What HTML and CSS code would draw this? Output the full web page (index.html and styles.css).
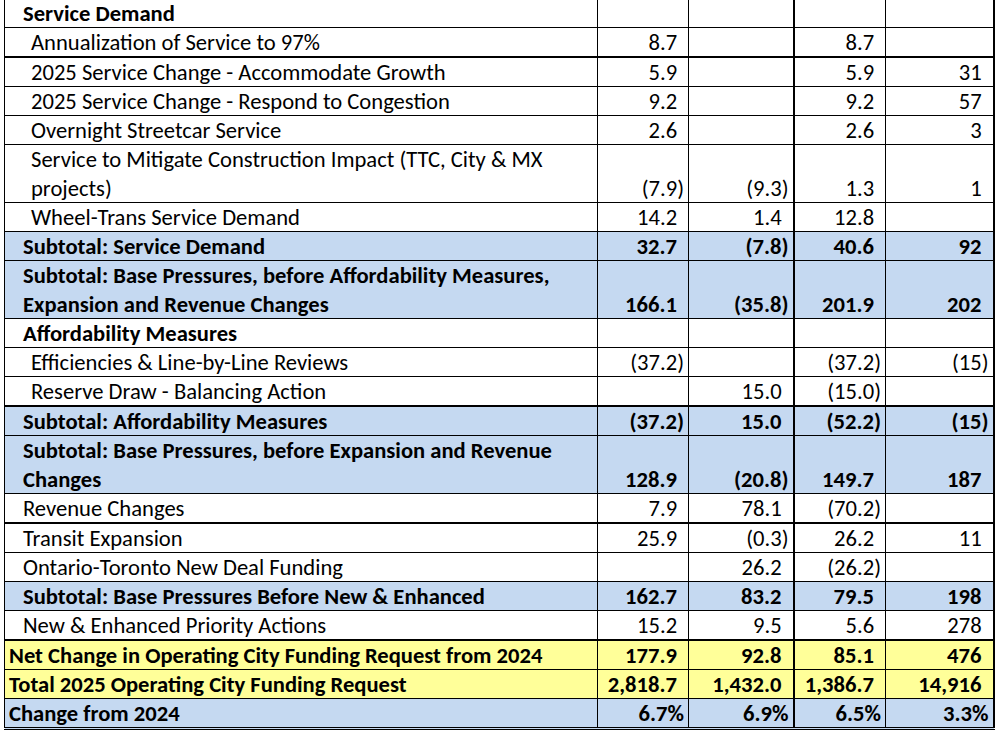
FILE: index.html
```html
<!DOCTYPE html>
<html lang="en">
<head>
<meta charset="utf-8">
<title>2025 Operating Budget Summary</title>
<link rel="stylesheet" href="styles.css">
</head>
<body>
<div class="sheet">
<table class="budget">
  <colgroup>
    <col class="c-label"><col class="c-a"><col class="c-b"><col class="c-c"><col class="c-d">
  </colgroup>
  <tbody>
    <tr class="r1">
      <th class="lbl in1 b">Service Demand</th><td></td><td class="sep"></td><td></td><td></td>
    </tr>
    <tr class="thick">
      <th class="lbl in2">Annualization of Service to 97%</th><td class="p">8.7</td><td class="sep"></td><td class="p">8.7</td><td></td>
    </tr>
    <tr>
      <th class="lbl in2">2025 Service Change - Accommodate Growth</th><td class="p">5.9</td><td class="sep"></td><td class="p">5.9</td><td class="p">31</td>
    </tr>
    <tr>
      <th class="lbl in2">2025 Service Change - Respond to Congestion</th><td class="p">9.2</td><td class="sep"></td><td class="p">9.2</td><td class="p">57</td>
    </tr>
    <tr>
      <th class="lbl in2">Overnight Streetcar Service</th><td class="p">2.6</td><td class="sep"></td><td class="p">2.6</td><td class="p">3</td>
    </tr>
    <tr class="dbl">
      <th class="lbl in2">Service to Mitigate Construction Impact (TTC, City &amp; MX<br>projects)</th><td class="ng">(7.9)</td><td class="sep ng">(9.3)</td><td class="p">1.3</td><td class="p">1</td>
    </tr>
    <tr>
      <th class="lbl in2">Wheel-Trans Service Demand</th><td class="p">14.2</td><td class="sep p">1.4</td><td class="p">12.8</td><td></td>
    </tr>
    <tr class="blue b">
      <th class="lbl in1">Subtotal: Service Demand</th><td class="p">32.7</td><td class="sep ng">(7.8)</td><td class="p">40.6</td><td class="p">92</td>
    </tr>
    <tr class="blue b dbl">
      <th class="lbl in1">Subtotal: Base Pressures, before Affordability Measures,<br>Expansion and Revenue Changes</th><td class="p">166.1</td><td class="sep ng">(35.8)</td><td class="p">201.9</td><td class="p">202</td>
    </tr>
    <tr class="b">
      <th class="lbl in1">Affordability Measures</th><td></td><td class="sep"></td><td></td><td></td>
    </tr>
    <tr>
      <th class="lbl in2">Efficiencies &amp; Line-by-Line Reviews</th><td class="ng">(37.2)</td><td class="sep"></td><td class="ng">(37.2)</td><td class="ng">(15)</td>
    </tr>
    <tr class="thick">
      <th class="lbl in2">Reserve Draw - Balancing Action</th><td></td><td class="sep p">15.0</td><td class="ng">(15.0)</td><td></td>
    </tr>
    <tr class="blue b">
      <th class="lbl in1">Subtotal: Affordability Measures</th><td class="ng">(37.2)</td><td class="sep p">15.0</td><td class="ng">(52.2)</td><td class="ng">(15)</td>
    </tr>
    <tr class="blue b dbl">
      <th class="lbl in1">Subtotal: Base Pressures, before Expansion and Revenue<br>Changes</th><td class="p">128.9</td><td class="sep ng">(20.8)</td><td class="p">149.7</td><td class="p">187</td>
    </tr>
    <tr class="thick">
      <th class="lbl in1">Revenue Changes</th><td class="p">7.9</td><td class="sep p">78.1</td><td class="ng">(70.2)</td><td></td>
    </tr>
    <tr>
      <th class="lbl in1">Transit Expansion</th><td class="p">25.9</td><td class="sep ng">(0.3)</td><td class="p">26.2</td><td class="p">11</td>
    </tr>
    <tr>
      <th class="lbl in1">Ontario-Toronto New Deal Funding</th><td></td><td class="sep p">26.2</td><td class="ng">(26.2)</td><td></td>
    </tr>
    <tr class="blue b">
      <th class="lbl in1">Subtotal: Base Pressures Before New &amp; Enhanced</th><td class="p">162.7</td><td class="sep p">83.2</td><td class="p">79.5</td><td class="p">198</td>
    </tr>
    <tr class="thick">
      <th class="lbl in1">New &amp; Enhanced Priority Actions</th><td class="p">15.2</td><td class="sep p">9.5</td><td class="p">5.6</td><td class="p">278</td>
    </tr>
    <tr class="yellow b">
      <th class="lbl in0">Net Change in Operating City Funding Request from 2024</th><td class="p">177.9</td><td class="sep p">92.8</td><td class="p">85.1</td><td class="p">476</td>
    </tr>
    <tr class="yellow b">
      <th class="lbl in0">Total 2025 Operating City Funding Request</th><td class="p">2,818.7</td><td class="sep p">1,432.0</td><td class="p">1,386.7</td><td class="p">14,916</td>
    </tr>
    <tr class="blue b last">
      <th class="lbl in0">Change from 2024</th><td>6.7%</td><td class="sep">6.9%</td><td>6.5%</td><td>3.3%</td>
    </tr>
  </tbody>
</table>
</div>
</body>
</html>
```

FILE: styles.css
```css
html, body {
  margin: 0;
  padding: 0;
  background: #ffffff;
}

.sheet {
  padding-left: 4px;
}

.budget {
  border-collapse: collapse;
  table-layout: fixed;
  width: 990px;
  font-family: Carlito, Calibri, Lato, "Liberation Sans", sans-serif;
  font-size: 22.6px;
  color: #000;
  border-left: 1px solid #000;
  border-right: 2px solid #000;
}

.c-label { width: 593px; }
.c-a { width: 91px; }
.c-b { width: 105px; }
.c-c { width: 92px; }
.c-d { width: 108px; }

.budget th,
.budget td {
  line-height: 28px;
  padding: 0 4px 0 0;
  border: 1px solid #000;
  vertical-align: bottom;
  white-space: nowrap;
}

.budget th {
  text-align: left;
  font-weight: 400;
}

.budget td {
  text-align: right;
}

.budget td.sep {
  border-right: 2px solid #000;
}

.budget td.p::after {
  content: ")";
  visibility: hidden;
}

.budget .lbl { vertical-align: top; }
.in0 { padding-left: 4px !important; }
.in1 { padding-left: 18px !important; }
.in2 { padding-left: 26px !important; }

.b th, .b td, th.b { font-weight: 700; }

.r1 th, .r1 td {
  line-height: 27px;
  border-top: none;
}

.dbl th { line-height: 28.5px; }

.thick th, .thick td { border-bottom: 2px solid #000; }

.blue th, .blue td { background: #c5d9f1; }
.yellow th, .yellow td { background: #ffff99; }

.last th, .last td { border-bottom: 3px double #000; }
```
